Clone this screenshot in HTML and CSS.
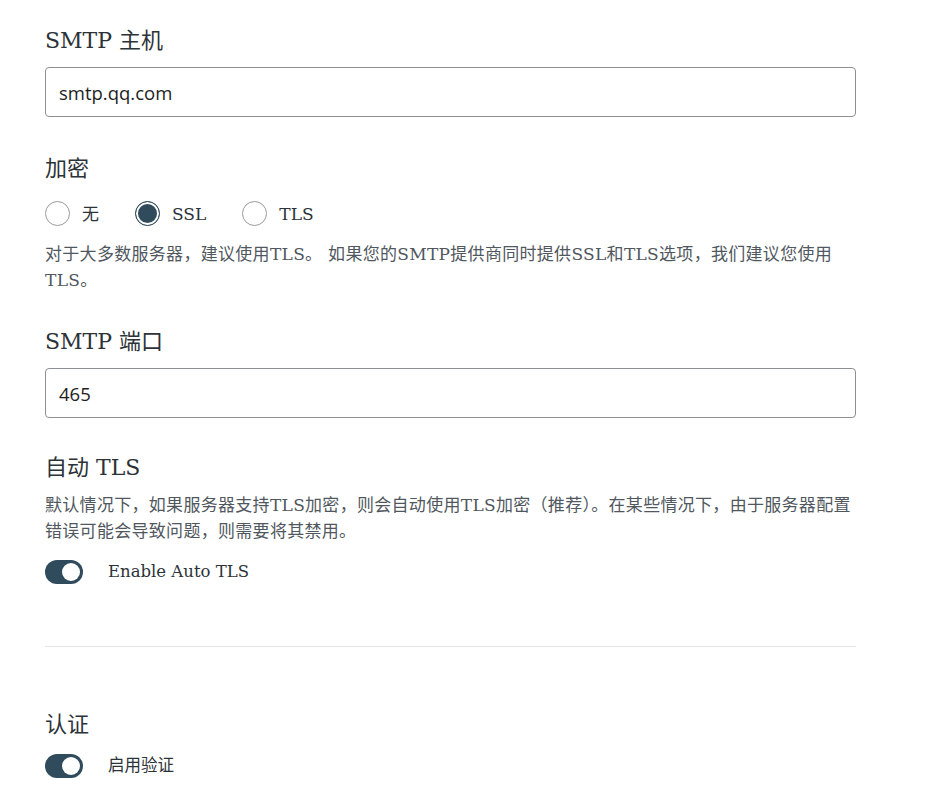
FILE: index.html
```html
<!DOCTYPE html>
<html lang="zh">
<head>
<meta charset="utf-8">
<title>SMTP 设置</title>
<link rel="stylesheet" href="styles.css">
</head>
<body>
<div class="form">
  <div class="field field-host">
    <div class="label">SMTP 主机</div>
    <input class="text-input" type="text" value="smtp.qq.com">
  </div>

  <div class="field field-enc">
    <div class="label">加密</div>
    <div class="radios">
      <label class="radio"><span class="radio-dot"></span><span class="radio-text">无</span></label>
      <label class="radio"><span class="radio-dot checked"></span><span class="radio-text">SSL</span></label>
      <label class="radio"><span class="radio-dot"></span><span class="radio-text">TLS</span></label>
    </div>
    <p class="help help-enc">对于大多数服务器，建议使用TLS。 如果您的SMTP提供商同时提供SSL和TLS选项，我们建议您使用TLS。</p>
  </div>

  <div class="field field-port">
    <div class="label">SMTP 端口</div>
    <input class="text-input" type="text" value="465">
  </div>

  <div class="field field-tls">
    <div class="label">自动 TLS</div>
    <p class="help help-tls">默认情况下，如果服务器支持TLS加密，则会自动使用TLS加密（推荐）。在某些情况下，由于服务器配置错误可能会导致问题，则需要将其禁用。</p>
    <div class="toggle-row toggle-row-tls">
      <span class="toggle"><span class="knob"></span></span>
      <span class="toggle-text">Enable Auto TLS</span>
    </div>
  </div>

  <hr class="divider">

  <div class="field field-auth">
    <div class="label">认证</div>
    <div class="toggle-row toggle-row-auth">
      <span class="toggle"><span class="knob"></span></span>
      <span class="toggle-text">启用验证</span>
    </div>
  </div>
</div>
</body>
</html>
```
FILE: styles.css
```css
html, body {
  margin: 0;
  padding: 0;
  background: #ffffff;
}
body {
  font-family: "DejaVu Serif", "Noto Sans CJK SC", serif;
  color: #2c3338;
}
.form {
  width: 811px;
  margin-left: 45px;
  padding-top: 25px;
}
.field {
  margin-bottom: 34px;
}
.field-host {
  margin-bottom: 36px;
}
.field-enc {
  margin-bottom: 33px;
}
.label {
  font-size: 22px;
  line-height: 32px;
  color: #2c3338;
  margin-bottom: 10px;
}
.text-input {
  display: block;
  box-sizing: border-box;
  width: 811px;
  height: 50px;
  margin: 0;
  padding: 0 13px;
  border: 1px solid #8c8f94;
  border-radius: 4px;
  font-family: "Open Sans", "Noto Sans", sans-serif;
  font-size: 18.5px;
  color: #1e1e1e;
  background: #fff;
  outline: none;
}
.radios {
  display: flex;
  align-items: center;
  gap: 36px;
  margin-top: 16px;
  height: 25px;
}
.radio {
  display: flex;
  align-items: center;
  gap: 12px;
}
.radio-dot {
  box-sizing: border-box;
  width: 25px;
  height: 25px;
  border-radius: 50%;
  border: 1px solid #9a9a9a;
  background: #fff;
}
.radio-dot.checked {
  border: 1.5px solid #2f4b5c;
  box-shadow: inset 0 0 0 2px #fff;
  background: #2f4b5c;
}
.radio-text {
  font-size: 17px;
  line-height: 24px;
  color: #2c3338;
}
.help {
  margin: 0;
  font-size: 17px;
  letter-spacing: 0.3px;
  color: #50575e;
}
.help-enc {
  margin-top: 15px;
  line-height: 26px;
}
.help-tls {
  margin-top: -1px;
  line-height: 25.5px;
}
.toggle-row {
  display: flex;
  align-items: center;
  gap: 25px;
}
.toggle-row-tls {
  margin-top: 16px;
}
.toggle-row-auth {
  margin-top: 13px;
}
.toggle {
  box-sizing: border-box;
  display: flex;
  align-items: center;
  justify-content: flex-end;
  width: 38px;
  height: 24px;
  padding: 0 3px;
  border-radius: 12px;
  background: #2f4b5c;
}
.knob {
  width: 18px;
  height: 18px;
  border-radius: 50%;
  background: #fff;
}
.toggle-text {
  font-size: 16.5px;
  line-height: 24px;
  color: #2c3338;
}
.divider {
  border: 0;
  border-top: 1px solid #e4e4e4;
  margin: 62px 0 62px;
}
```
